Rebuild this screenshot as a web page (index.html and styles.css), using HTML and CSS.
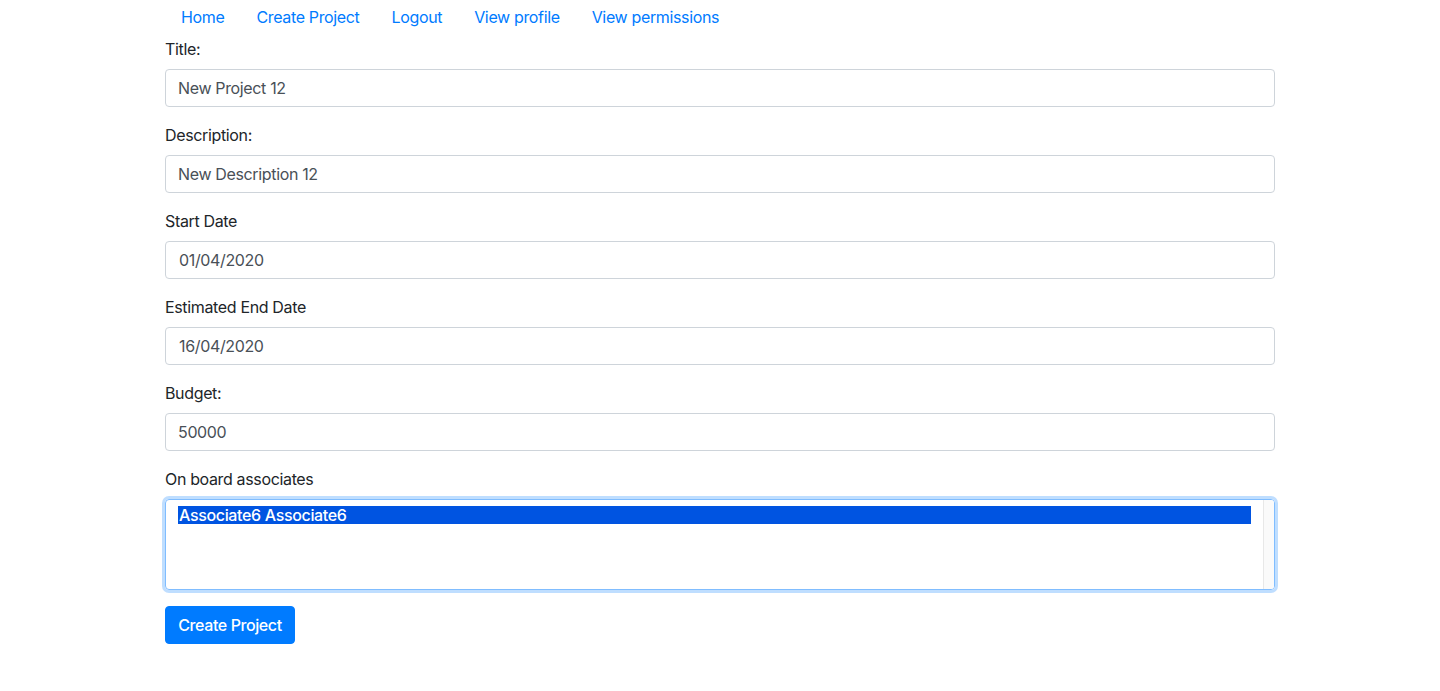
FILE: index.html
```html
<!DOCTYPE html>
<html>
<head>
<meta charset="utf-8">
<link rel="stylesheet" href="styles.css">
</head>
<body>
<div class="container">
  <nav class="nav">
    <a class="nav-link" href="#">Home</a>
    <a class="nav-link" href="#">Create Project</a>
    <a class="nav-link" href="#">Logout</a>
    <a class="nav-link" href="#">View profile</a>
    <a class="nav-link" href="#">View permissions</a>
  </nav>
  <form class="form">
    <div class="form-group">
      <label class="label">Title:</label>
      <div class="input">New Project 12</div>
    </div>
    <div class="form-group">
      <label class="label">Description:</label>
      <div class="input">New Description 12</div>
    </div>
    <div class="form-group">
      <label class="label">Start Date</label>
      <div class="input date">01/04/2020</div>
    </div>
    <div class="form-group">
      <label class="label">Estimated End Date</label>
      <div class="input date">16/04/2020</div>
    </div>
    <div class="form-group">
      <label class="label">Budget:</label>
      <div class="input">50000</div>
    </div>
    <div class="form-group">
      <label class="label">On board associates</label>
      <div class="listbox">
        <div class="options">
          <div class="option selected">Associate6 Associate6</div>
        </div>
        <div class="scrollbar"></div>
      </div>
    </div>
    <button type="button" class="btn">Create Project</button>
  </form>
</div>
</body>
</html>
```
FILE: styles.css
```css
* { box-sizing: border-box; }
html, body { margin: 0; padding: 0; background: #fff; }
body {
  font-family: Inter, "Liberation Sans", sans-serif;
  font-size: 16px;
  line-height: 24px;
  letter-spacing: -0.35px;
  color: #212529;
}
.container {
  width: 1140px;
  margin: 0 auto;
  padding: 0 15px;
}
.nav {
  display: flex;
  height: 37px;
}
.nav-link {
  display: block;
  padding: 5px 16px 8px;
  color: #007bff;
  text-decoration: none;
}
.form-group { margin-bottom: 16px; }
.label {
  display: block;
  margin-bottom: 8px;
}
.input {
  height: 38px;
  border: 1px solid #ced4da;
  border-radius: 4px;
  padding: 6px 12px;
  color: #495057;
}
.input.date { padding-left: 13px; }
.listbox {
  height: 91px;
  border: 1px solid #80bdff;
  border-radius: 4px;
  box-shadow: 0 0 0 3px rgba(0, 123, 255, 0.25);
  display: flex;
  overflow: hidden;
}
.options {
  flex: 1;
  padding: 6px 12px;
}
.option {
  height: 18px;
  line-height: 18px;
  padding-left: 1px;
}
.option.selected {
  background: #0054e1;
  color: #fff;
  font-weight: 500;
}
.scrollbar {
  width: 11px;
  background: #fafafa;
  border-left: 1px solid #e8e8e8;
}
.btn {
  font: inherit;
  font-weight: 500;
  letter-spacing: -0.4px;
  white-space: nowrap;
  height: 38px;
  width: 130px;
  background: #007bff;
  color: #fff;
  border: 1px solid #007bff;
  border-radius: 4px;
  padding: 6px 0;
  text-align: center;
}
```
